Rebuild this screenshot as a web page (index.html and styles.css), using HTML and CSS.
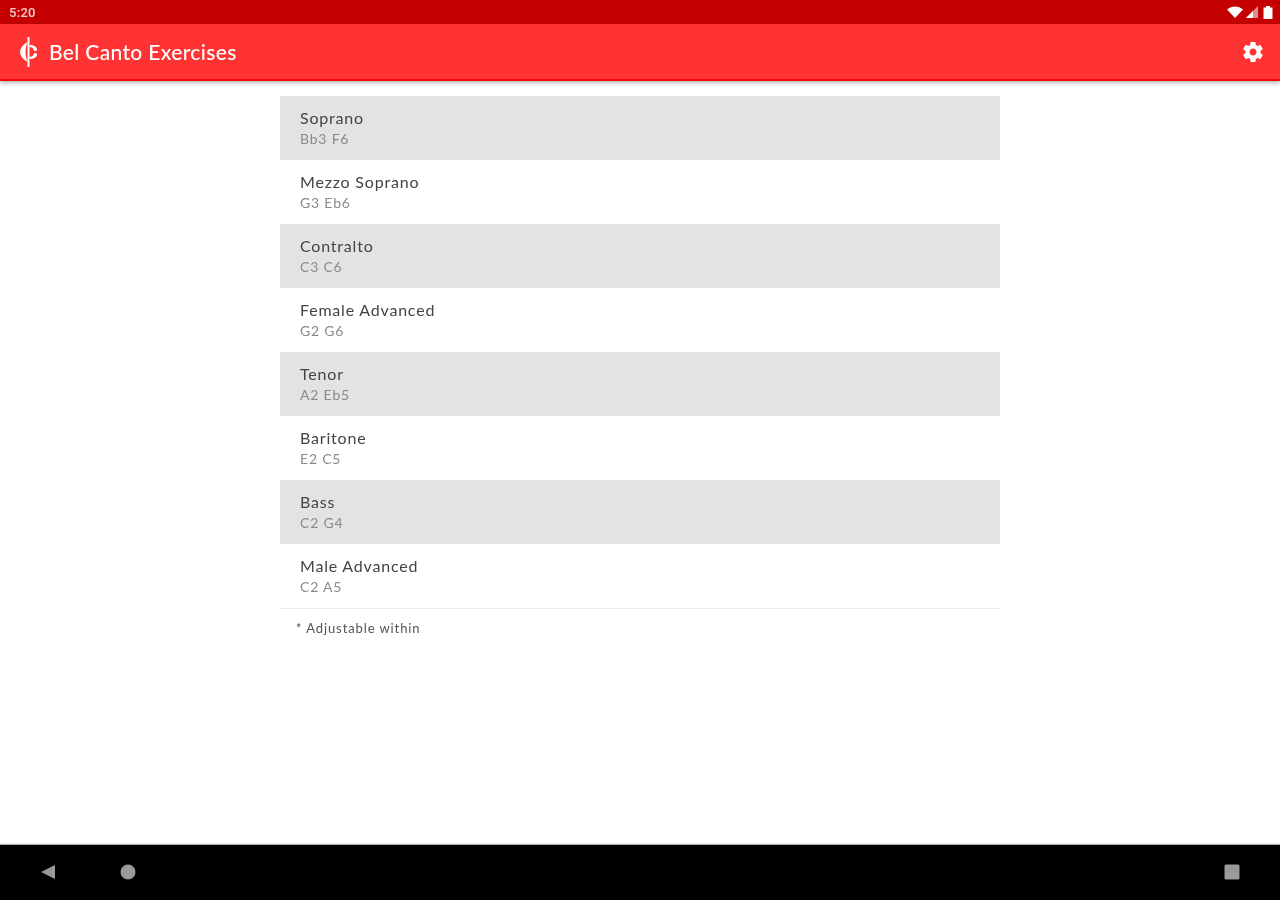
FILE: index.html
```html
<!DOCTYPE html>
<html lang="en">
<head>
    <meta charset="UTF-8">
    <title>Bel Canto Exercises</title>
    <link rel="stylesheet" href="styles.css">
</head>
<body>
    <div class="status-bar">
        <span class="clock">5:20</span>
        <div class="status-icons">
            <svg width="16" height="12" viewBox="0 0 16 12"><path d="M0 3.500C4.500 -0.500 11.500 -0.500 16 3.500L8 12Z" fill="#fff"/></svg>
            <svg class="signal" width="12" height="12" viewBox="0 0 12 12"><path d="M12 0V12H0Z" fill="#fff" opacity="0.55"/><path d="M7 5V12H0L7 5Z" fill="#fff"/></svg>
            <svg width="10" height="13" viewBox="0 0 10 13"><path d="M3 0H7V1.500H9.500V13H0.500V1.500H3Z" fill="#fff"/></svg>
        </div>
    </div>

    <header class="app-bar">
        <svg class="logo" width="20" height="30" viewBox="0 0 20 30">
            <path d="M8.500 0H10.500V30H8.500Z" fill="#fff"/>
            <path d="M8.500 5C3.500 8 1 11.500 1 15C1 18.500 3.500 22 8.500 25C7.500 21.500 6.500 18.500 6.500 15C6.500 11.500 7.500 8.500 8.500 5Z" fill="#fff"/>
            <path d="M10.500 8C15 8 18 10 18 12.500C18 14.500 14.800 14.700 14.500 12.500C14.300 11 12.500 10 10.500 10.500Z" fill="#fff"/>
            <path d="M10.500 22C15 22 18 20 18 17.500C18 15.500 14.800 15.300 14.500 17.500C14.300 19 12.500 20 10.500 19.500Z" fill="#fff"/>
        </svg>
        <h1 class="app-title">Bel Canto Exercises</h1>
        <svg class="settings" width="24" height="24" viewBox="0 0 24 24"><path d="M19.430 12.980c.040-.320.070-.640.070-.980s-.030-.660-.070-.980l2.110-1.650c.190-.150.240-.420.120-.640l-2-3.460c-.120-.220-.390-.300-.610-.220l-2.490 1c-.520-.400-1.080-.730-1.690-.980l-.380-2.650C14.460 2.180 14.250 2 14 2h-4c-.250 0-.460.180-.490.420l-.380 2.650c-.610.250-1.170.590-1.690.980l-2.490-1c-.230-.090-.490 0-.610.220l-2 3.460c-.130.220-.070.490.120.640l2.110 1.650c-.040.320-.070.650-.070.980s.030.660.070.980l-2.110 1.650c-.190.150-.240.420-.120.640l2 3.460c.120.220.390.300.610.220l2.490-1c.520.400 1.080.730 1.690.980l.380 2.650c.030.240.240.420.490.420h4c.250 0 .460-.180.490-.420l.380-2.650c.610-.250 1.170-.590 1.690-.980l2.490 1c.230.090.490 0 .610-.220l2-3.460c.120-.220.070-.490-.120-.640l-2.110-1.650zM12 15.500c-1.930 0-3.500-1.570-3.500-3.500s1.570-3.500 3.500-3.500 3.500 1.570 3.500 3.500-1.570 3.500-3.500 3.500z" fill="#fff"/></svg>
    </header>

    <main class="content">
        <ul class="voice-list">
            <li class="voice shaded"><div class="voice-name">Soprano</div><div class="voice-range">Bb3 F6</div></li>
            <li class="voice"><div class="voice-name">Mezzo Soprano</div><div class="voice-range">G3 Eb6</div></li>
            <li class="voice shaded"><div class="voice-name">Contralto</div><div class="voice-range">C3 C6</div></li>
            <li class="voice"><div class="voice-name">Female Advanced</div><div class="voice-range">G2 G6</div></li>
            <li class="voice shaded"><div class="voice-name">Tenor</div><div class="voice-range">A2 Eb5</div></li>
            <li class="voice"><div class="voice-name">Baritone</div><div class="voice-range">E2 C5</div></li>
            <li class="voice shaded"><div class="voice-name">Bass</div><div class="voice-range">C2 G4</div></li>
            <li class="voice"><div class="voice-name">Male Advanced</div><div class="voice-range">C2 A5</div></li>
        </ul>
        <p class="footnote">* Adjustable within</p>
    </main>

    <nav class="nav-bar">
        <div class="nav-left">
            <svg width="16" height="16" viewBox="0 0 16 16"><path d="M15 1V15L1 8Z" fill="#9a9a9a"/></svg>
            <svg width="16" height="16" viewBox="0 0 16 16"><circle cx="8" cy="8" r="7.500" fill="#9a9a9a"/></svg>
        </div>
        <svg width="16" height="16" viewBox="0 0 16 16"><rect x="0.500" y="0.500" width="15" height="15" rx="1.500" fill="#9a9a9a"/></svg>
    </nav>
</body>
</html>
```

FILE: styles.css
```css
html, body {
    margin: 0;
    height: 100%;
}

body {
    display: flex;
    flex-direction: column;
    height: 900px;
    overflow: hidden;
    background: #fff;
    font-family: "Lato", "Open Sans", sans-serif;
}

.status-bar {
    height: 24px;
    flex-shrink: 0;
    background: #c40000;
    color: #fff;
    display: flex;
    justify-content: space-between;
    align-items: center;
    padding: 0 7px 0 9px;
}

.clock {
    font-family: "Roboto", sans-serif;
    font-size: 13px;
    font-weight: 500;
    letter-spacing: 0.3px;
    color: #f3d0d0;
    filter: blur(0.4px);
}

.status-icons {
    display: flex;
    align-items: center;
    gap: 3px;
    filter: blur(0.4px);
}

.signal {
    margin-right: 2px;
}

.app-bar {
    height: 57px;
    flex-shrink: 0;
    box-sizing: border-box;
    background: #ff3333;
    border-bottom: 2px solid #f40808;
    box-shadow: 0 2px 4px rgba(0, 0, 0, 0.3);
    display: flex;
    align-items: center;
    padding: 0 15px 0 19px;
    color: #fff;
}

.logo {
    margin-right: 10px;
    filter: blur(0.4px);
}

.settings {
    filter: blur(0.4px);
}

.app-title {
    flex: 1;
    margin: 0;
    font-size: 21px;
    font-weight: 500;
    letter-spacing: 0.35px;
    filter: blur(0.4px);
}

.content {
    flex: 1;
    padding-top: 15px;
}

.voice-list {
    list-style: none;
    width: 720px;
    margin: 0 auto;
    padding: 0;
    border-bottom: 1px solid #ececec;
}

.voice {
    height: 64px;
    box-sizing: border-box;
    padding: 12px 20px 0;
}

.voice.shaded {
    background: #e3e3e3;
}

.voice-name {
    font-size: 16px;
    line-height: 20px;
    letter-spacing: 0.8px;
    color: #444;
    filter: blur(0.4px);
}

.voice-range {
    font-size: 14px;
    line-height: 21px;
    letter-spacing: 0.8px;
    color: #8a8a8a;
    filter: blur(0.4px);
}

.footnote {
    width: 688px;
    margin: 9px auto 0;
    font-size: 13px;
    line-height: 20px;
    letter-spacing: 0.9px;
    color: #555;
    filter: blur(0.4px);
}

.nav-bar {
    height: 55px;
    flex-shrink: 0;
    box-sizing: border-box;
    background: #000;
    box-shadow: 0 -1px 1px rgba(0, 0, 0, 0.3);
    display: flex;
    justify-content: space-between;
    align-items: center;
    padding: 0 40px 2px;
}

.nav-left {
    display: flex;
    align-items: center;
    gap: 64px;
}
```
